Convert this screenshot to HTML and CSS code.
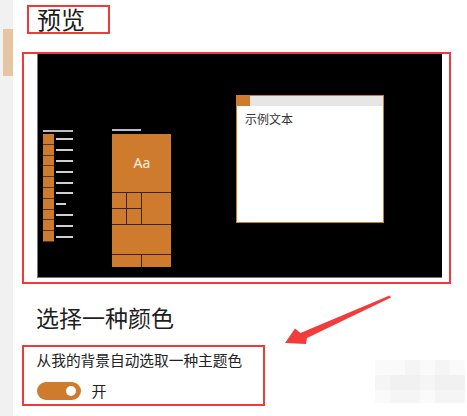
FILE: index.html
```html
<!DOCTYPE html>
<html lang="zh-CN">
<head>
  <meta charset="UTF-8">
  <meta name="viewport" content="width=device-width, initial-scale=1.0">
  <title>预览</title>
  <link rel="stylesheet" href="styles.css">
</head>
<body>
  <div class="page">
    <!-- left scroll rail -->
    <div class="rail"><div class="rail_thumb"></div></div>

    <div class="main">
      <div class="title_box"><h2 class="title">预览</h2></div>

      <!-- preview -->
      <div class="preview_box">
        <div class="preview">
          <div class="start_list">
            <div class="list_head"></div>
            <div class="list_row"><span class="list_icon"></span><span class="list_line"></span></div>
            <div class="list_row"><span class="list_icon"></span><span class="list_line"></span></div>
            <div class="list_row"><span class="list_icon"></span><span class="list_line"></span></div>
            <div class="list_row"><span class="list_icon"></span><span class="list_line"></span></div>
            <div class="list_row"><span class="list_icon"></span><span class="list_line"></span></div>
            <div class="list_row"><span class="list_icon"></span><span class="list_line"></span></div>
            <div class="list_row"><span class="list_icon"></span><span class="list_line short"></span></div>
            <div class="list_row"><span class="list_icon"></span><span class="list_line"></span></div>
            <div class="list_row"><span class="list_icon"></span><span class="list_line"></span></div>
            <div class="list_row"><span class="list_icon"></span><span class="list_line"></span></div>
          </div>

          <div class="tile_group">
            <div class="tile_head"></div>
            <div class="tiles">
              <div class="tile big">Aa</div>
              <div class="tile"></div>
              <div class="tile"></div>
              <div class="tile mid"></div>
              <div class="tile"></div>
              <div class="tile"></div>
              <div class="tile wide"></div>
              <div class="tile half_l"></div>
              <div class="tile half_r"></div>
            </div>
          </div>

          <div class="window">
            <div class="window_bar"><span class="window_icon"></span></div>
            <p class="window_text">示例文本</p>
          </div>
        </div>
      </div>

      <h2 class="section_title">选择一种颜色</h2>

      <div class="auto_box">
        <p class="auto_label">从我的背景自动选取一种主题色</p>
        <div class="toggle_row">
          <span class="toggle"><span class="knob"></span></span>
          <span class="toggle_text">开</span>
        </div>
      </div>
    </div>

    <!-- faint mosaic in the corner -->
    <div class="mosaic">
      <span class="m1"></span><span class="m1"></span><span class="m2"></span><span class="m1"></span><span class="m2"></span><span class="m1"></span>
      <span class="m2"></span><span class="m3"></span><span class="m3"></span><span class="m2"></span><span class="m3"></span><span class="m3"></span>
      <span class="m1"></span><span class="m2"></span><span class="m2"></span><span class="m1"></span><span class="m2"></span><span class="m2"></span>
    </div>

    <!-- red annotation arrow -->
    <svg class="arrow" width="467" height="416" viewBox="0 0 467 416">
      <polygon fill="#f23c3c" points="389.5,295.5 391,297.5 307,338 306,344 285,343 295,328.5 300.5,333"/>
    </svg>
  </div>
</body>
</html>
```

FILE: styles.css
```css
* {
  box-sizing: border-box;
  margin: 0;
}
body {
  background: #fff;
  font-family: "Noto Sans CJK SC", "Noto Sans", sans-serif;
  color: #222;
}
.page {
  position: relative;
  display: flex;
  width: 467px;
  height: 416px;
  overflow: hidden;
}

.rail {
  width: 13px;
  background: #f1f1f1;
  padding-top: 29px;
  padding-left: 3px;
}
.rail_thumb {
  height: 47px;
  background: #e6c5a3;
}

.main {
  padding-left: 9px;
  width: 454px;
}

.title_box {
  margin: 5px 0 0 5px;
  width: 83px;
  height: 29px;
  border: 2px solid #f03a3a;
  padding-left: 8px;
}
.title {
  font-size: 24px;
  font-weight: 400;
  line-height: 24px;
  color: #1a1a1a;
}

.preview_box {
  margin-top: 18px;
  width: 429px;
  height: 232px;
  border: 2px solid #f03a3a;
  padding: 0 5px 4px 13px;
}
.preview {
  display: flex;
  align-items: flex-start;
  height: 224px;
  width: 405px;
  background: #000;
  border-left: 1px solid #777;
  border-bottom: 1px solid #777;
  padding: 41px 0 0 5px;
}

.start_list {
  margin-top: 34.5px;
  width: 30px;
}
.list_head {
  height: 2px;
  background: #bdbdbd;
  margin-bottom: 2.5px;
}
.list_row {
  display: flex;
  align-items: center;
  height: 10.8px;
}
.list_icon {
  width: 10.5px;
  height: 100%;
  background: #cf7b2d;
  border-bottom: 1px solid #5c3511;
}
.list_line {
  width: 17px;
  height: 2px;
  margin-left: 2px;
  background: #cfcfcf;
}
.list_line.short {
  width: 10px;
}

.tile_group {
  margin: 34px 0 0 39px;
}
.tile_head {
  width: 29px;
  height: 2px;
  background: #bdbdbd;
  margin-bottom: 2.5px;
}
.tiles {
  display: grid;
  grid-template-columns: 14px 14px 29px;
  grid-template-rows: 58px 15px 15px 29px 12px;
  gap: 1px;
  width: 59px;
  background: #3d240c;
}
.tile {
  background: #cf7b2d;
}
.tile.big {
  grid-column: 1 / 4;
  display: flex;
  align-items: center;
  justify-content: center;
  color: #fbeee0;
  font-family: "Noto Sans", sans-serif;
  font-size: 14px;
  padding-left: 1px;
}
.tile.mid {
  grid-column: 3;
  grid-row: 2 / 4;
}
.tile.wide {
  grid-column: 1 / 4;
}
.tile.half_l {
  grid-column: 1 / 3;
}

.window {
  margin-left: 65px;
  width: 148px;
  height: 128px;
  background: #fff;
  border: 1px solid #cf7b2d;
}
.window_bar {
  height: 10px;
  background: #e6e6e6;
}
.window_icon {
  display: block;
  width: 13px;
  height: 10px;
  background: #cf7b2d;
}
.window_text {
  margin: 5px 0 0 8px;
  font-size: 12px;
  line-height: 16px;
  color: #333;
}

.section_title {
  margin: 18px 0 0 14px;
  font-size: 23px;
  font-weight: 400;
  line-height: 30px;
  color: #1e1e1e;
}

.auto_box {
  margin-top: 13px;
  width: 243px;
  height: 61px;
  border: 2px solid #f03a3a;
  padding: 3px 0 0 12.5px;
}
.auto_label {
  font-size: 14.7px;
  line-height: 20px;
  color: #222;
}
.toggle_row {
  display: flex;
  align-items: center;
  margin-top: 10px;
}
.toggle {
  display: flex;
  align-items: center;
  justify-content: flex-end;
  width: 44px;
  height: 18px;
  border-radius: 9px;
  background: #cf7b2d;
  padding-right: 5px;
}
.knob {
  width: 10px;
  height: 10px;
  border-radius: 50%;
  background: #fff;
}
.toggle_text {
  margin-left: 11px;
  font-size: 15px;
  color: #222;
}

.mosaic {
  position: absolute;
  left: 375px;
  top: 360px;
  display: grid;
  grid-template-columns: repeat(6, 15px);
  grid-template-rows: 15px 15px 13px;
}
.m1 { background: #fafafa; }
.m2 { background: #f5f5f5; }
.m3 { background: #f1f1f1; }

.arrow {
  position: absolute;
  left: 0;
  top: 0;
  pointer-events: none;
}
```
